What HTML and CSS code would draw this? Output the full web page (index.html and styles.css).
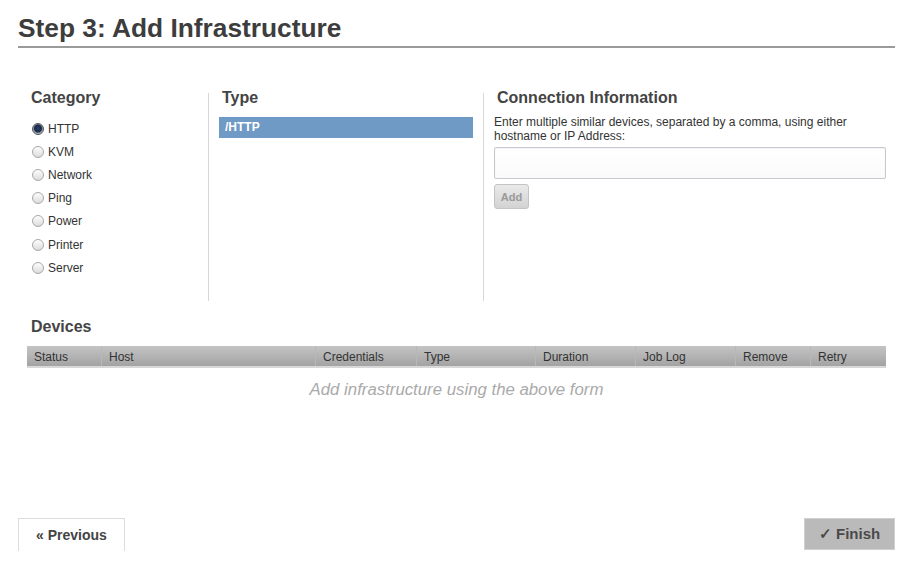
FILE: index.html
```html
<!DOCTYPE html>
<html>
<head>
<meta charset="utf-8">
<link rel="stylesheet" href="styles.css">
</head>
<body>
<div class="page">
  <h1 class="title">Step 3: Add Infrastructure</h1>

  <div class="columns">
    <div class="col col-category">
      <h2 class="col-head">Category</h2>
      <ul class="radio-list">
        <li class="radio-item"><span class="radio checked"></span>HTTP</li>
        <li class="radio-item"><span class="radio"></span>KVM</li>
        <li class="radio-item"><span class="radio"></span>Network</li>
        <li class="radio-item"><span class="radio"></span>Ping</li>
        <li class="radio-item"><span class="radio"></span>Power</li>
        <li class="radio-item"><span class="radio"></span>Printer</li>
        <li class="radio-item"><span class="radio"></span>Server</li>
      </ul>
    </div>
    <div class="col col-type">
      <h2 class="col-head">Type</h2>
      <div class="type-item selected">/HTTP</div>
    </div>
    <div class="col col-conn">
      <h2 class="col-head">Connection Information</h2>
      <p class="conn-text">Enter multiple similar devices, separated by a comma, using either hostname or IP Address:</p>
      <div class="conn-input"></div>
      <button class="add-btn">Add</button>
    </div>
  </div>

  <h2 class="devices-head">Devices</h2>
  <div class="table">
    <div class="thead">
      <div class="th w-status">Status</div>
      <div class="th w-host">Host</div>
      <div class="th w-cred">Credentials</div>
      <div class="th w-type">Type</div>
      <div class="th w-dur">Duration</div>
      <div class="th w-log">Job Log</div>
      <div class="th w-rem">Remove</div>
      <div class="th w-retry">Retry</div>
    </div>
    <div class="empty">Add infrastructure using the above form</div>
  </div>

  <div class="nav">
    <button class="btn-prev">« Previous</button>
    <button class="btn-finish">✓ Finish</button>
  </div>
</div>
</body>
</html>
```

FILE: styles.css
```css
* { box-sizing: border-box; }
html, body { margin: 0; padding: 0; background: #fff; }
body {
  font-family: "Liberation Sans", Arial, sans-serif;
  color: #333;
  width: 917px;
  height: 569px;
  overflow: hidden;
}
.page {
  padding: 0 22px 0 18px;
}
.title {
  margin: 0;
  padding-top: 12px;
  font-size: 26.3px;
  line-height: 32px;
  font-weight: bold;
  color: #3d3d3d;
  border-bottom: 2px solid #9a9a9a;
  padding-bottom: 2px;
}
.columns {
  display: grid;
  grid-template-columns: 190px 275px 1fr;
  margin-top: 40px;
  height: 213px;
}
.col-category { padding-left: 13px; }
.col-type {
  border-left: 1px solid #d6d6d6;
  padding: 0 10px 0 10px;
  margin-top: 5px;
}
.col-conn {
  border-left: 1px solid #d6d6d6;
  padding: 0 9px 0 10px;
  margin-top: 5px;
}
.col-head {
  margin: 0;
  font-size: 16px;
  line-height: 20px;
  font-weight: bold;
  color: #444;
}
.col-type .col-head,
.col-conn .col-head { margin-top: -5px; padding-left: 3px; }
.radio-list {
  list-style: none;
  margin: 9px 0 0 0;
  padding: 0;
}
.radio-item {
  display: flex;
  align-items: center;
  height: 23.2px;
  font-size: 12px;
  color: #333;
}
.radio {
  width: 12px;
  height: 12px;
  border-radius: 50%;
  border: 1px solid #a9a9a9;
  background: linear-gradient(#fdfdfd, #dcdcdc);
  margin-left: 1px;
  margin-right: 4px;
  flex: none;
}
.radio.checked {
  border-color: #555;
  background: radial-gradient(circle at 50% 45%, #2b3f63 0, #18284a 3.5px, #8a93a6 4.5px, #d3d7de 6px);
}
.type-item {
  margin-top: 9px;
  height: 21px;
  line-height: 21px;
  padding-left: 6px;
  font-size: 12px;
  font-weight: bold;
  color: #fff;
  background: #6f9ac6;
}
.conn-text {
  margin: 7px 0 0 0;
  font-size: 12px;
  line-height: 14px;
  color: #333;
}
.conn-input {
  margin-top: 4px;
  height: 32px;
  border: 1px solid #c8c8d0;
  border-radius: 2px;
  background: linear-gradient(#fff, #fafafa);
  box-shadow: inset 0 1px 2px rgba(0,0,0,0.06);
}
.add-btn {
  margin-top: 5px;
  width: 35px;
  height: 25px;
  padding: 0;
  border: 1px solid #c4c4c4;
  border-radius: 3px;
  background: linear-gradient(#e9e9e9, #d3d3d3);
  color: #999;
  font-family: "Liberation Sans", Arial, sans-serif;
  font-size: 11px;
  font-weight: bold;
  display: block;
}
.devices-head {
  margin: 16px 0 0 13px;
  font-size: 16px;
  line-height: 20px;
  font-weight: bold;
  color: #444;
}
.table {
  margin: 9px 9px 0 9px;
}
.thead {
  display: flex;
  height: 22px;
  background: linear-gradient(#c4c4c4, #a3a3a3);
  border-bottom: 2px solid #d8d8d8;
}
.th {
  font-size: 12px;
  line-height: 22px;
  color: #333;
  padding-left: 7px;
  border-left: 1px solid #b8b8b8;
}
.th:first-child { border-left: none; }
.w-status { width: 74px; }
.w-host { width: 214px; }
.w-cred { width: 101px; }
.w-type { width: 119px; }
.w-dur { width: 100px; }
.w-log { width: 100px; }
.w-rem { width: 75px; }
.w-retry { flex: 1; }
.empty {
  text-align: center;
  font-size: 16.8px;
  font-style: italic;
  color: #aaa;
  margin-top: 12px;
  line-height: 20px;
}
.nav {
  display: flex;
  justify-content: space-between;
  align-items: flex-start;
  margin-top: 118px;
}
.btn-prev {
  width: 107px;
  height: 33px;
  border: 1px solid #dcdcdc;
  border-bottom: none;
  background: #fff;
  font-family: "Liberation Sans", Arial, sans-serif;
  font-size: 14px;
  font-weight: bold;
  color: #444;
  padding: 0;
}
.btn-finish {
  width: 91px;
  height: 32px;
  border: 1px solid #d0d0d0;
  background: #bababa;
  font-family: "Liberation Sans", Arial, sans-serif;
  font-size: 15px;
  font-weight: bold;
  color: #4a4a4a;
  padding: 0;
}
```
